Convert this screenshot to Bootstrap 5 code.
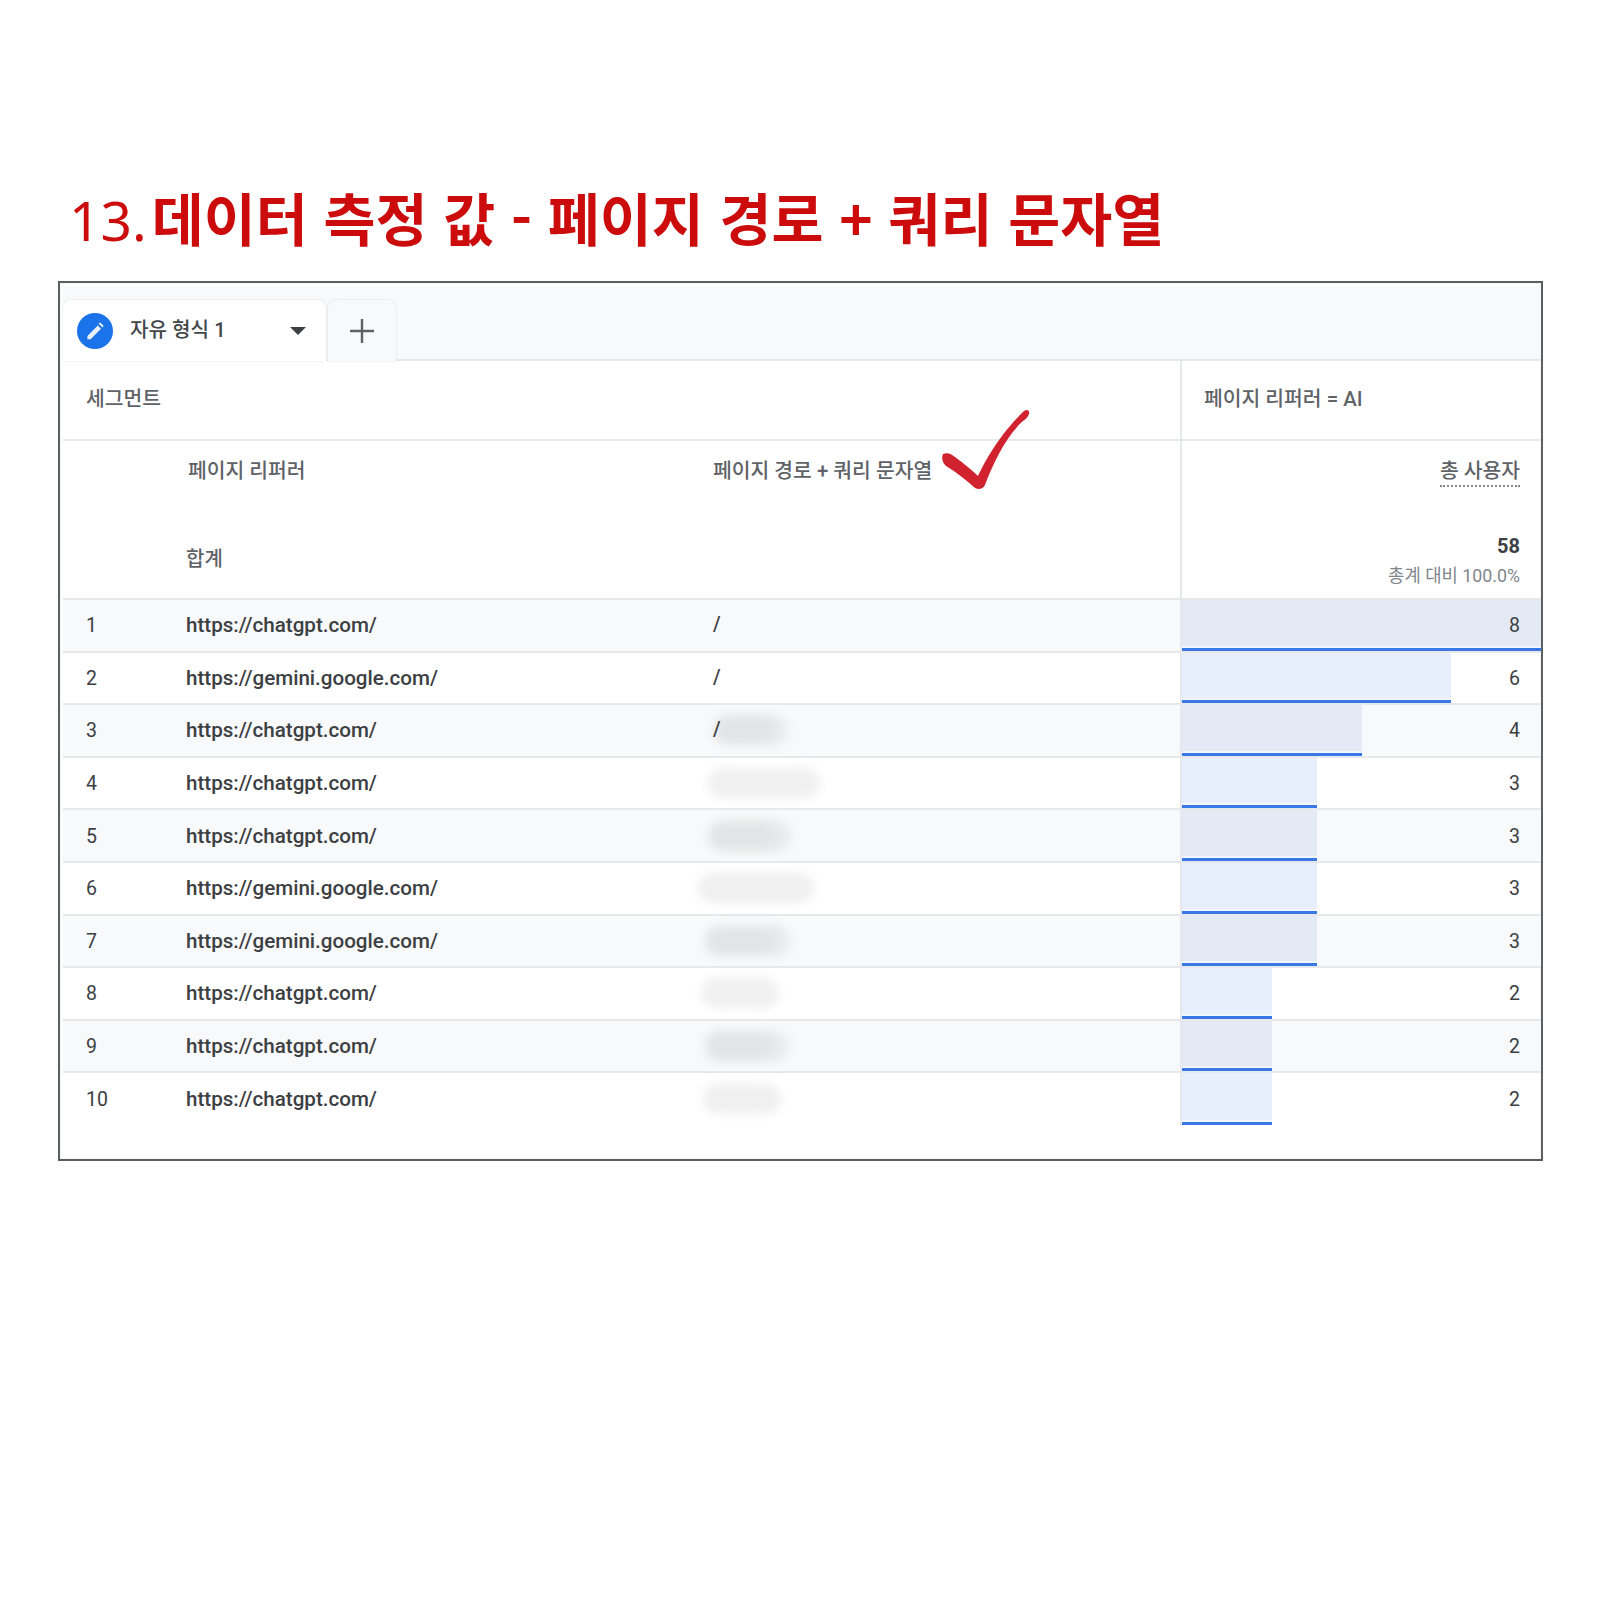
<!DOCTYPE html>
<html lang="ko">
<head>
<meta charset="utf-8">
<title>데이터 측정 값</title>
<link href="https://cdn.jsdelivr.net/npm/bootstrap@5.3.0/dist/css/bootstrap.min.css" rel="stylesheet">
<style>
body{background:#fff;font-family:Roboto,"Noto Sans CJK KR",sans-serif;color:#3c4043;}
.page{padding:178px 57px 0 58px;height:1600px;}
.title{font-family:"Noto Sans CJK KR",sans-serif;font-size:56.5px;font-weight:700;line-height:76px;color:#cc0c0c;margin:0 0 23px 11px;white-space:nowrap;}
.title .num{font-family:"Noto Sans",sans-serif;font-size:55px;font-weight:400;margin-right:5px;}
.frame{border:2px solid #5c5f62;padding:3px 0 30px 3px;background:#fff;height:880px;box-shadow:inset 0 0 1px #aaa;}
.strip{background:#f8f9fa;height:75px;padding-top:14px;padding-left:0;border-bottom:2px solid #e6e8eb;gap:2px;}
.tabx{height:61px;margin-bottom:-2px;background:#fff;border-radius:8px 8px 0 0;width:263px;box-shadow:0 0 2px #d5d8dc;font-size:20.15px;font-weight:500;color:#44474a;padding:0 20px 0 14px;gap:17px;}
.tabx .dot{width:36px;height:36px;border-radius:50%;background:#1a73e8;flex:none;}
.tabx .caret{width:0;height:0;border-left:8px solid transparent;border-right:8px solid transparent;border-top:8px solid #3c4043;margin-left:auto;}
.addtab{width:68px;height:61px;margin-bottom:-2px;border-radius:8px 8px 0 0;background:#f8f9fa;box-shadow:0 0 2px #cfd2d6;}
.report{table-layout:fixed;width:1478px;--bs-table-striped-bg:#f8f9fa;--bs-table-border-color:#e6e8eb;--bs-table-color:#3c4043;--bs-table-striped-color:#3c4043;}
.report>:not(caption)>*>*{padding:0;border-bottom-width:2px;}
.report th{font-weight:500;color:#5f6368;font-size:20.4px;}
.report .seg th{height:79px;padding-bottom:2px;vertical-align:middle;}
.report .seg .lab{padding-left:23px;}
.report .heads th{height:72px;border-bottom:0;vertical-align:top;padding-top:15px;}
.report .heads .refh{margin-left:2px;}
.report .totals td{height:87px;vertical-align:top;color:#5f6368;font-size:20px;font-weight:500;}
.report .right{border-left:2px solid #e6e8eb;text-align:right;padding-right:21px;padding-left:22px;}
.report .seg .right{text-align:left;}
.dashed{border-bottom:2px dotted #80868b;padding-bottom:2px;display:inline-block;line-height:24px;}
.head2{position:relative;}
.check{position:absolute;left:228px;top:-33px;width:90px;height:84px;}
.tot{padding-top:32px;}
.sum{font-size:20px;font-weight:700;color:#3c4043;line-height:24px;margin-top:22px;}
.sub{font-size:17.8px;font-weight:400;color:#80868b;line-height:24px;margin-top:6px;}
.report tbody td{height:52.6px;vertical-align:middle;font-size:19.5px;font-weight:500;color:#3c4043;line-height:24px;}
.report tbody tr:last-child td{border-bottom:0;}
.report tbody .idx{padding-left:23px;padding-top:2px;font-weight:400;}
.report tbody .right{padding-top:2px;}
.report .url{padding-left:0;font-size:20.6px;}
.barcell{position:relative;}
.bar{position:absolute;left:0;top:0;bottom:0;background:#e8effc;border-bottom:3px solid #3b78e7;box-shadow:inset 0 -2px 0 #f3f6fd;}
.report.table-striped tbody tr:nth-of-type(odd) .bar{background:#e4eaf5;}
.val{position:relative;font-weight:400;}
.slash{position:relative;z-index:1;}
.smudge{display:inline-block;height:30px;border-radius:16px;filter:blur(5px);vertical-align:middle;background:#f0f0f0;}
.smudge.dk{background:linear-gradient(90deg,#e3e4e6 70%,#eceef0);}
.pathcell{display:flex;align-items:center;height:100%;}
</style>
</head>
<body>
<main class="page">
  <h1 class="title"><span class="num">13.</span>데이터 측정 값 - 페이지 경로 + 쿼리 문자열</h1>
  <section class="frame">
    <div class="strip d-flex align-items-start">
      <div class="tabx d-flex align-items-center">
        <span class="dot d-flex align-items-center justify-content-center">
          <svg width="26" height="26" viewBox="0 0 24 24" fill="#e8f0fe"><path d="M5 16.6V19.6h3L17.6 10l-3-3L5 16.6zM19.5 8.1a.9.9 0 000-1.3l-2.2-2.2a.9.9 0 00-1.3 0l-.6.6 3.5 3.5.6-.6z"/></svg>
        </span>
        <span>자유 형식 1</span>
        <span class="caret"></span>
      </div>
      <div class="addtab d-flex align-items-center justify-content-center">
        <svg width="28" height="28" viewBox="0 0 28 28" stroke="#5f6368" stroke-width="2.4" fill="none"><path d="M14 2v24M2 14h24"/></svg>
      </div>
    </div>
    <table class="table table-striped report mb-0">
      <colgroup><col style="width:123px"><col style="width:527px"><col style="width:468px"><col style="width:360px"></colgroup>
      <thead>
        <tr class="seg"><th colspan="3" class="lab">세그먼트</th><th class="right">페이지 리퍼러 = AI</th></tr>
        <tr class="heads">
          <th></th>
          <th><span class="refh">페이지 리퍼러</span></th>
          <th class="head2">페이지 경로 + 쿼리 문자열
            <svg class="check" viewBox="0 0 90 84"><path d="M2 46c5-2 8 0 12 3 8 6 16 12 23 19 7-15 22-42 46-65 3-2 6-1 5 3-1 3-3 5-6 7-16 14-30 42-38 64-2 4-6 5-10 3-9-8-19-16-29-22-3-3-5-7-3-12z" fill="#d1222f"/></svg>
          </th>
          <th class="right"><span class="dashed">총 사용자</span></th>
        </tr>
        <tr class="totals">
          <td></td>
          <td><div class="tot">합계</div></td>
          <td></td>
          <td class="right"><div class="sum">58</div><div class="sub">총계 대비 100.0%</div></td>
        </tr>
      </thead>
      <tbody>
        <tr><td class="idx">1</td><td class="url">https://chatgpt.com/</td><td>/</td><td class="right barcell"><div class="bar" style="width:100%"></div><span class="val">8</span></td></tr>
        <tr><td class="idx">2</td><td class="url">https://gemini.google.com/</td><td>/</td><td class="right barcell"><div class="bar" style="width:75%"></div><span class="val">6</span></td></tr>
        <tr><td class="idx">3</td><td class="url">https://chatgpt.com/</td><td><div class="pathcell"><span class="slash">/</span><span class="smudge dk" style="width:74px;margin-left:-7px"></span></div></td><td class="right barcell"><div class="bar" style="width:50%"></div><span class="val">4</span></td></tr>
        <tr><td class="idx">4</td><td class="url">https://chatgpt.com/</td><td><div class="pathcell"><span class="smudge" style="width:112px;margin-left:-5px"></span></div></td><td class="right barcell"><div class="bar" style="width:37.5%"></div><span class="val">3</span></td></tr>
        <tr><td class="idx">5</td><td class="url">https://chatgpt.com/</td><td><div class="pathcell"><span class="smudge dk" style="width:84px;margin-left:-5px"></span></div></td><td class="right barcell"><div class="bar" style="width:37.5%"></div><span class="val">3</span></td></tr>
        <tr><td class="idx">6</td><td class="url">https://gemini.google.com/</td><td><div class="pathcell"><span class="smudge" style="width:116px;margin-left:-15px"></span></div></td><td class="right barcell"><div class="bar" style="width:37.5%"></div><span class="val">3</span></td></tr>
        <tr><td class="idx">7</td><td class="url">https://gemini.google.com/</td><td><div class="pathcell"><span class="smudge dk" style="width:86px;margin-left:-8px"></span></div></td><td class="right barcell"><div class="bar" style="width:37.5%"></div><span class="val">3</span></td></tr>
        <tr><td class="idx">8</td><td class="url">https://chatgpt.com/</td><td><div class="pathcell"><span class="smudge" style="width:78px;margin-left:-12px"></span></div></td><td class="right barcell"><div class="bar" style="width:25%"></div><span class="val">2</span></td></tr>
        <tr><td class="idx">9</td><td class="url">https://chatgpt.com/</td><td><div class="pathcell"><span class="smudge dk" style="width:84px;margin-left:-8px"></span></div></td><td class="right barcell"><div class="bar" style="width:25%"></div><span class="val">2</span></td></tr>
        <tr><td class="idx">10</td><td class="url">https://chatgpt.com/</td><td><div class="pathcell"><span class="smudge" style="width:78px;margin-left:-10px"></span></div></td><td class="right barcell"><div class="bar" style="width:25%"></div><span class="val">2</span></td></tr>
      </tbody>
    </table>
  </section>
</main>
<script src="https://cdn.jsdelivr.net/npm/bootstrap@5.3.0/dist/js/bootstrap.bundle.min.js"></script>
</body>
</html>
